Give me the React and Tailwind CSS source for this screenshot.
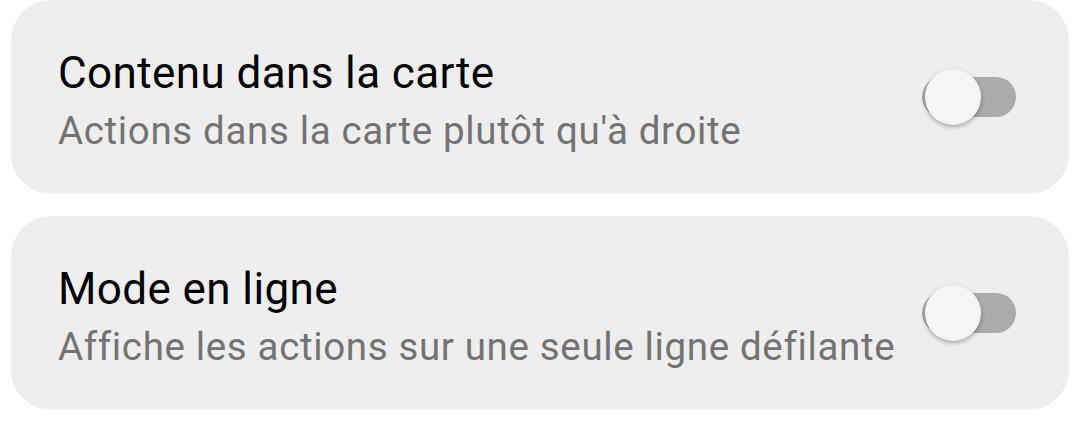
const items = [
  { title: 'Contenu dans la carte', subtitle: "Actions dans la carte plutôt qu'à droite" },
  { title: 'Mode en ligne', subtitle: 'Affiche les actions sur une seule ligne défilante' },
];

function Switch() {
  return (
    <div className="relative w-[94px] h-[56px] flex items-center shrink-0">
      <div className="w-full h-[40px] rounded-full bg-[#ababab]" />
      <div className="absolute left-[3px] top-0 w-[56px] h-[56px] rounded-full bg-[#f5f5f5] shadow-[0_2px_4px_rgba(0,0,0,0.3)]" />
    </div>
  );
}

function SettingCard({ title, subtitle }) {
  return (
    <div className="flex items-center justify-between bg-[#eeeeee] rounded-[40px] pl-[47px] pr-[53px]">
      <div className="flex flex-col pt-[43px] pb-[35px]">
        <div className="text-[44px] leading-[60px] tracking-[0.4px] text-black">{title}</div>
        <div className="text-[38.5px] leading-[56px] tracking-[0.65px] text-[#737373]">{subtitle}</div>
      </div>
      <Switch />
    </div>
  );
}

export default function App() {
  return (
    <div
      className="w-[1079px] h-[447px] bg-white pl-[11px] pr-[10px] flex flex-col gap-[22px]"
      style={{ fontFamily: 'Roboto, sans-serif' }}
    >
      {items.map((item, i) => (
        <SettingCard key={i} {...item} />
      ))}
    </div>
  );
}
